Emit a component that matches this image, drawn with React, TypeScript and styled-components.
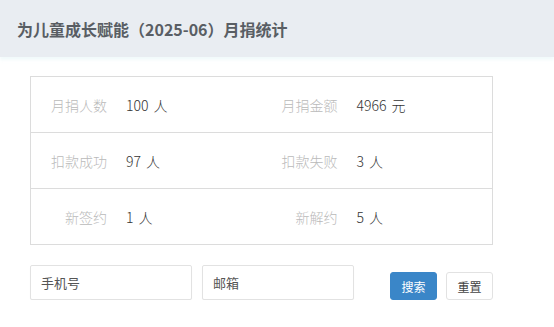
import React from "react";
import styled, { createGlobalStyle } from "styled-components";

const GlobalStyle = createGlobalStyle`
  body {
    margin: 0;
    background: #fff;
    font-family: "Noto Sans CJK SC", "Noto Sans", sans-serif;
  }
`;

const Header = styled.div`
  height: 57px;
  display: flex;
  align-items: center;
  padding-left: 17px;
  background-color: #e9edf2;
  box-shadow: 0 3px 3px rgba(235, 248, 250, 0.7);
`;

const Title = styled.h2`
  margin: 0;
  font-size: 16px;
  font-weight: 700;
  color: #595e64;
`;

const Content = styled.div`
  padding: 19px 30px 0 30px;
`;

const Stats = styled.div`
  width: 463px;
  box-sizing: border-box;
  border: 1px solid #dcdcdc;
`;

const StatRow = styled.div`
  display: grid;
  grid-template-columns: 84px 1fr 84px 1fr;
  height: 55px;
  align-items: center;
  & + & {
    border-top: 1px solid #dcdcdc;
  }
`;

const Label = styled.div`
  text-align: right;
  padding-right: 8px;
  font-size: 14px;
  font-weight: 300;
  color: #bababa;
`;

const Value = styled.div`
  padding-left: 11px;
  font-size: 14px;
  font-weight: 300;
  color: #333;
  word-spacing: 2px;
`;

const Filter = styled.div`
  display: flex;
  align-items: flex-end;
  margin-top: 20px;
  width: 463px;
`;

const Input = styled.input<{ $w: number }>`
  width: ${(p) => p.$w}px;
  height: 35px;
  box-sizing: border-box;
  margin-right: 10px;
  padding: 0 10px;
  border: 1px solid #e2e2e2;
  border-radius: 2px;
  box-shadow: 0 1px 1px rgba(0, 0, 0, 0.04);
  font-family: inherit;
  font-size: 13px;
  color: #555;
  outline: none;
  &::placeholder {
    color: #555;
  }
`;

const Button = styled.button<{ $primary?: boolean }>`
  width: 47px;
  height: 28px;
  box-sizing: border-box;
  margin-left: ${(p) => (p.$primary ? "auto" : "9px")};
  border: 1px solid ${(p) => (p.$primary ? "#3a86c8" : "#e2e2e2")};
  border-radius: 3px;
  background-color: ${(p) => (p.$primary ? "#3a86c8" : "#fff")};
  color: ${(p) => (p.$primary ? "#fff" : "#444")};
  font-family: inherit;
  font-size: 12px;
  padding: 0;
`;

const stats = [
  ["月捐人数", "100 人", "月捐金额", "4966 元"],
  ["扣款成功", "97 人", "扣款失败", "3 人"],
  ["新签约", "1 人", "新解约", "5 人"],
];

const App = () => {
  return (
    <>
      <GlobalStyle />
      <Header>
        <Title>为儿童成长赋能（2025-06）月捐统计</Title>
      </Header>
      <Content>
        <Stats>
          {stats.map((r) => (
            <StatRow key={r[0]}>
              <Label>{r[0]}</Label>
              <Value>{r[1]}</Value>
              <Label>{r[2]}</Label>
              <Value>{r[3]}</Value>
            </StatRow>
          ))}
        </Stats>
        <Filter>
          <Input $w={162} placeholder="手机号" />
          <Input $w={152} placeholder="邮箱" />
          <Button $primary>搜索</Button>
          <Button>重置</Button>
        </Filter>
      </Content>
    </>
  );
};

export default App;
